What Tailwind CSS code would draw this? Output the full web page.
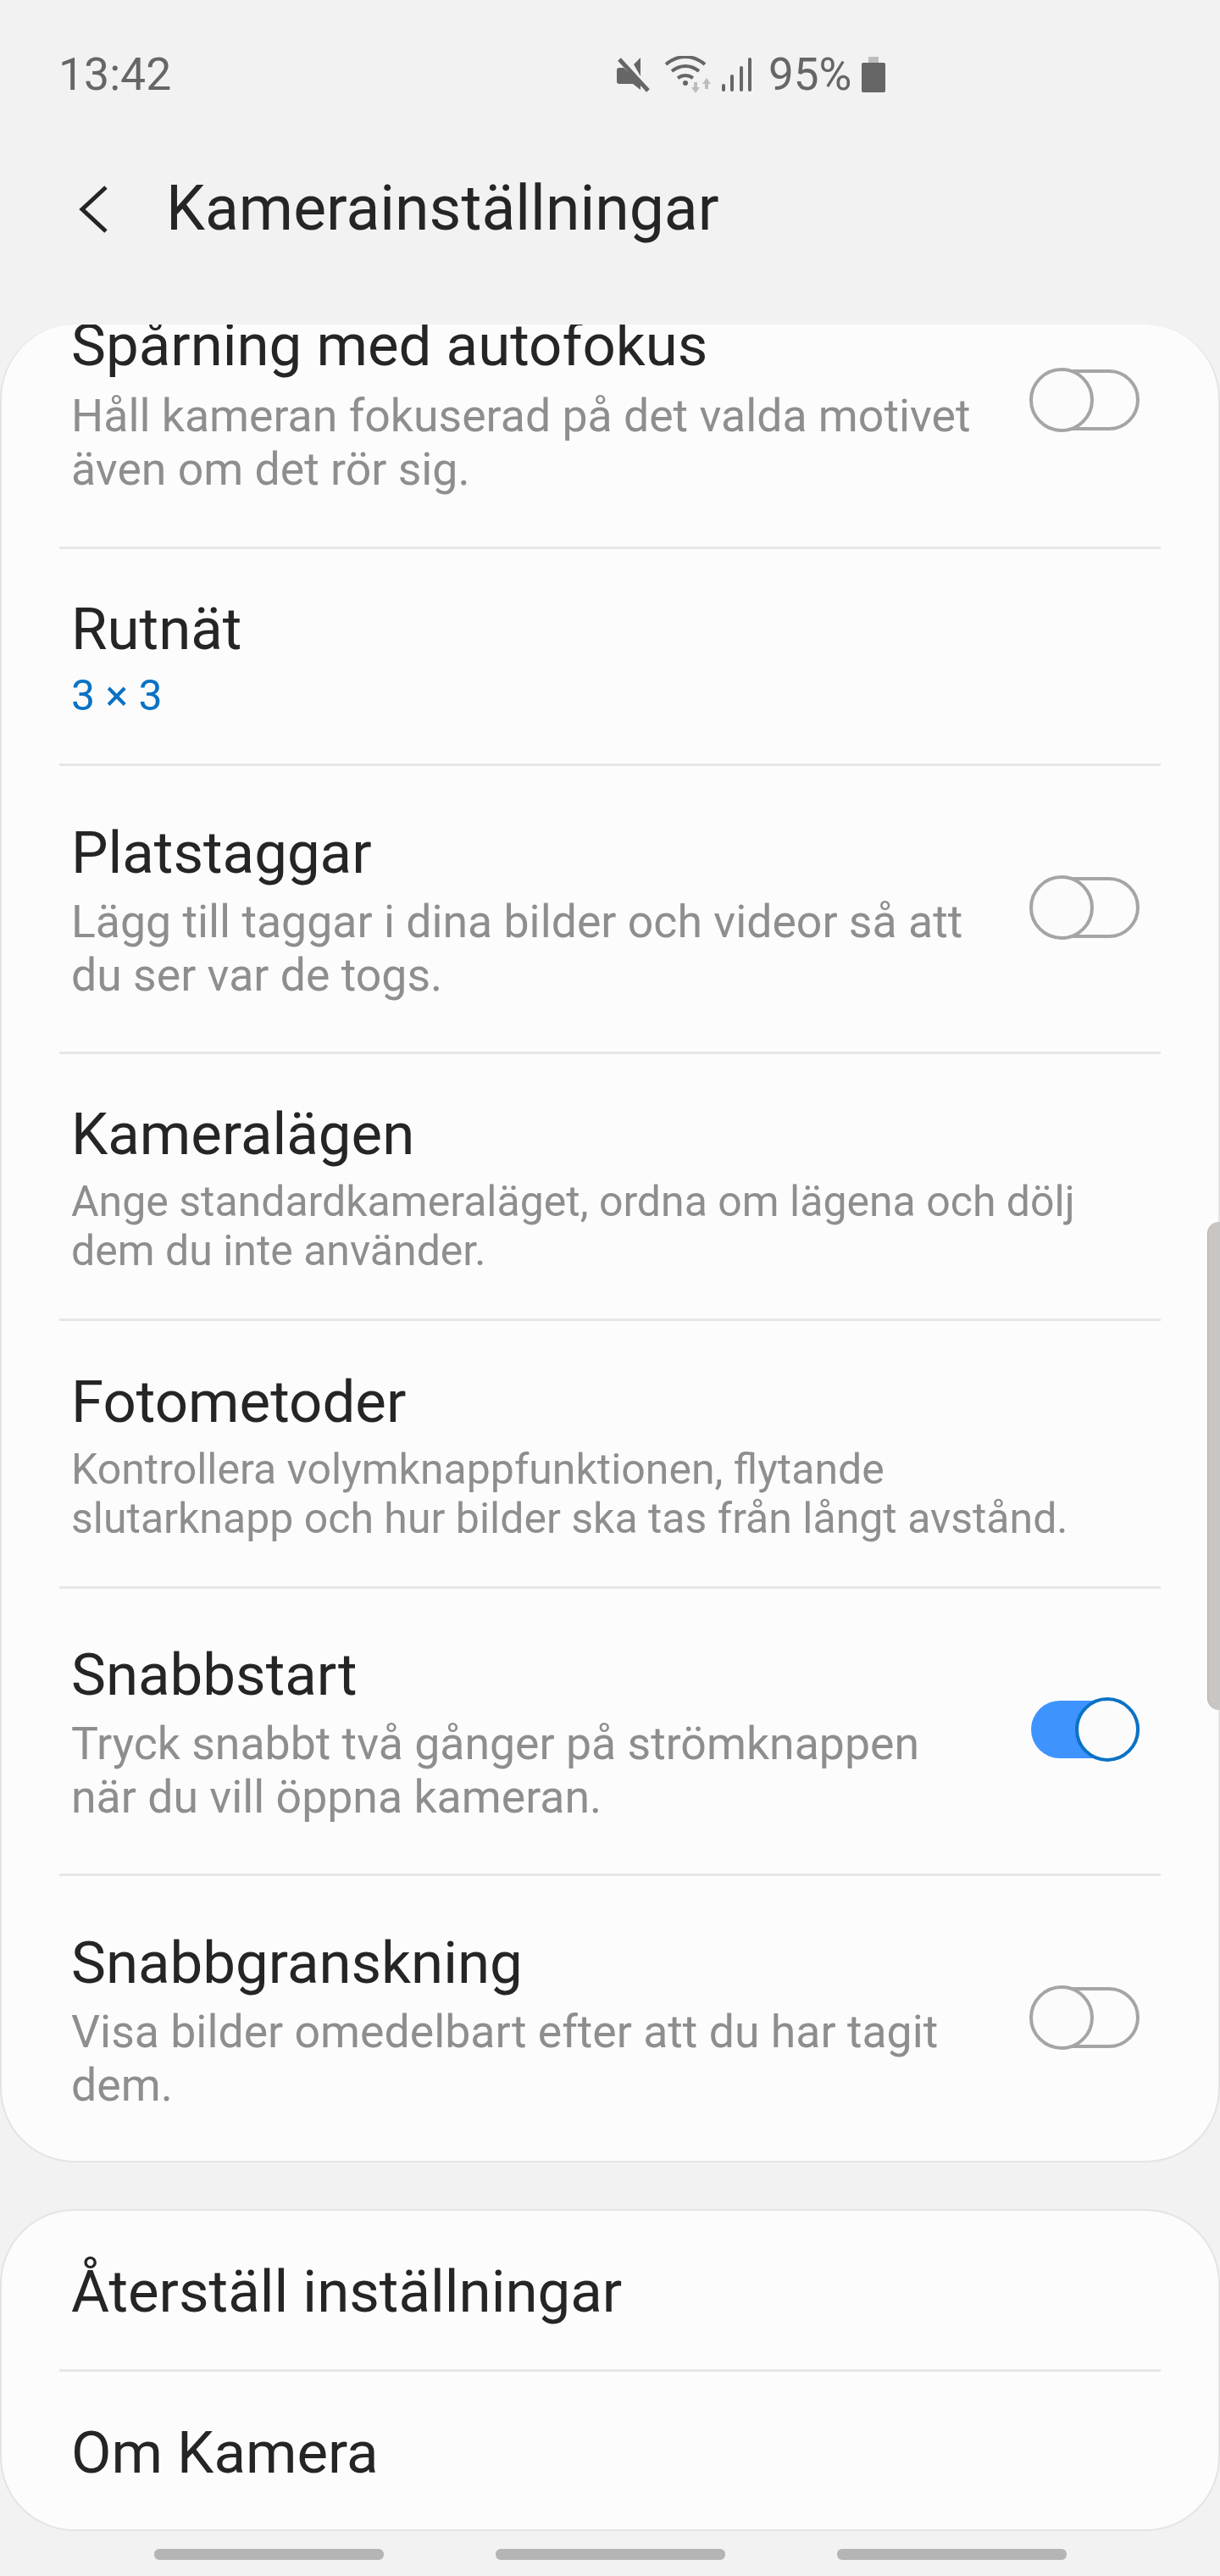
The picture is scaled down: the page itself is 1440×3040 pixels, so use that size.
<!DOCTYPE html>
<html lang="sv">
<head>
  <meta charset="UTF-8" />
  <title>Kamerainställningar</title>
  <script src="https://cdn.jsdelivr.net/npm/@tailwindcss/browser@4"></script>
</head>
<body class="bg-[#f2f2f2]">
<div class="relative w-[1440px] h-[3040px] overflow-hidden bg-[#f2f2f2] font-['Roboto',sans-serif] text-[#252525]">

  <!-- Status bar -->
  <div class="h-[176px] flex items-center pl-[69px] text-[#666666]">
    <div class="w-[659px] text-[53.5px] leading-none">13:42</div>
    <svg class="w-[39px] h-[41px] fill-[#666666]" viewBox="0 0 39 41">
      <path d="M0 15a3 3 0 0 1 3-3h5L28 30v8L19 31H3a3 3 0 0 1-3-3zM20 8l8-8v22z"/>
      <path d="M3 2l34 37" stroke="#666666" stroke-width="5" fill="none"/>
    </svg>
    <svg class="ml-[17px] w-[56px] h-[44px]" viewBox="0 0 56 44">
      <g fill="none" stroke="#666666" stroke-width="4">
        <path d="M2 10c14-12 32-12 46 0"/>
        <path d="M9 18c10-8 22-8 32 0"/>
        <path d="M16 26c6-4 12-4 18 0"/>
      </g>
      <circle cx="25" cy="32" r="3" fill="#666666"/>
      <path d="M37 44l-5-7h3v-6h4v6h3zM50 26l5 7h-3v6h-4v-6h-3z" fill="#bdbdbd"/>
    </svg>
    <svg class="ml-[12px] w-[36px] h-[40px] fill-[#666666]" viewBox="0 0 36 40">
      <rect x="0" y="31" width="4" height="9" rx="2"/>
      <rect x="10" y="20" width="4" height="20" rx="2"/>
      <rect x="21" y="10" width="4" height="30" rx="2"/>
      <rect x="31" y="0" width="4" height="40" rx="2"/>
    </svg>
    <div class="ml-[19px] text-[53px] leading-none">95%</div>
    <svg class="ml-[12px] w-[28px] h-[42px]" viewBox="0 0 28 42">
      <rect x="8" y="0" width="12" height="8" fill="#bdbdbd"/>
      <path d="M2 7h24a2 2 0 0 1 2 2v31a2 2 0 0 1-2 2H2a2 2 0 0 1-2-2V9a2 2 0 0 1 2-2z" fill="#666666"/>
    </svg>
  </div>

  <!-- Header -->
  <div class="h-[142px] flex items-center pl-[92px] mb-[65px]">
    <svg class="w-[36px] h-[58px]" viewBox="0 0 36 58" fill="none" stroke="#252525" stroke-width="5">
      <path d="M33 3L5 29l28 26"/>
    </svg>
    <div class="ml-[68px] text-[73.3px] leading-none">Kamerainställningar</div>
  </div>

  <!-- Main settings card -->
  <div class="h-[2169px] bg-[#fcfcfc] rounded-[88px] border-x-2 border-b-2 border-[#e4e4e4] overflow-hidden">

    <div class="-mt-[80px] h-[342px] flex items-center justify-between pl-[82px] pr-[93px]">
      <div>
        <div class="text-[69px] leading-[88px]">Spårning med autofokus</div>
        <div class="mt-[7px] text-[53.6px] leading-[63px] text-[#8e8e8e]">Håll kameran fokuserad på det valda motivet<br>även om det rör sig.</div>
      </div>
      <div class="relative w-[130px] h-[76px] mb-[4px]">
        <div class="absolute left-[2px] right-0 top-[2px] bottom-[2px] rounded-full border-4 border-[#a5a5a5]"></div>
        <div class="absolute left-0 top-0 w-[76px] h-[76px] rounded-full border-4 border-[#a5a5a5] bg-[#fbfbfb]"></div>
      </div>
    </div>
    <div class="mx-[68px] h-[3px] bg-[#e6e6e6]"></div>

    <div class="h-[253px] flex flex-col justify-center pl-[82px] pt-[2px]">
      <div class="text-[69px] leading-[88px]">Rutnät</div>
      <div class="mt-[3px] text-[50px] leading-[63px] text-[#0a72c4]">3 × 3</div>
    </div>
    <div class="mx-[68px] h-[3px] bg-[#e6e6e6]"></div>

    <div class="h-[337px] flex items-center justify-between pl-[82px] pr-[93px]">
      <div>
        <div class="text-[69px] leading-[88px]">Platstaggar</div>
        <div class="mt-[5px] text-[53.6px] leading-[63px] text-[#8e8e8e]">Lägg till taggar i dina bilder och videor så att<br>du ser var de togs.</div>
      </div>
      <div class="relative w-[130px] h-[76px] mb-[4px]">
        <div class="absolute left-[2px] right-0 top-[2px] bottom-[2px] rounded-full border-4 border-[#a5a5a5]"></div>
        <div class="absolute left-0 top-0 w-[76px] h-[76px] rounded-full border-4 border-[#a5a5a5] bg-[#fbfbfb]"></div>
      </div>
    </div>
    <div class="mx-[68px] h-[3px] bg-[#e6e6e6]"></div>

    <div class="h-[312px] flex flex-col justify-center pl-[82px]">
      <div class="text-[69px] leading-[88px]">Kameralägen</div>
      <div class="mt-[6px] text-[50px] leading-[58px] text-[#8e8e8e]">Ange standardkameraläget, ordna om lägena och dölj<br>dem du inte använder.</div>
    </div>
    <div class="mx-[68px] h-[3px] bg-[#e6e6e6]"></div>

    <div class="h-[313px] flex flex-col justify-center pl-[82px]">
      <div class="text-[69px] leading-[88px]">Fotometoder</div>
      <div class="mt-[6px] text-[50px] leading-[58px] text-[#8e8e8e]">Kontrollera volymknappfunktionen, flytande<br>slutarknapp och hur bilder ska tas från långt avstånd.</div>
    </div>
    <div class="mx-[68px] h-[3px] bg-[#e6e6e6]"></div>

    <div class="h-[336px] flex items-center justify-between pl-[82px] pr-[93px]">
      <div class="mb-[2px]">
        <div class="text-[69px] leading-[88px]">Snabbstart</div>
        <div class="mt-[5px] text-[53.6px] leading-[63px] text-[#8e8e8e]">Tryck snabbt två gånger på strömknappen<br>när du vill öppna kameran.</div>
      </div>
      <div class="relative w-[130px] h-[76px] mb-[5px]">
        <div class="absolute left-[2px] right-0 top-[4px] bottom-[4px] rounded-full bg-[#3e93ff]"></div>
        <div class="absolute right-0 top-0 w-[76px] h-[76px] rounded-full border-4 border-[#0b72c5] bg-[#fbfbfb]"></div>
      </div>
    </div>
    <div class="mx-[68px] h-[3px] bg-[#e6e6e6]"></div>

    <div class="h-[339px] flex items-center justify-between pl-[82px] pr-[93px]">
      <div class="mb-[2px]">
        <div class="text-[69px] leading-[88px]">Snabbgranskning</div>
        <div class="mt-[5px] text-[53.6px] leading-[63px] text-[#8e8e8e]">Visa bilder omedelbart efter att du har tagit<br>dem.</div>
      </div>
      <div class="relative w-[130px] h-[76px] mb-[5px]">
        <div class="absolute left-[2px] right-0 top-[2px] bottom-[2px] rounded-full border-4 border-[#a5a5a5]"></div>
        <div class="absolute left-0 top-0 w-[76px] h-[76px] rounded-full border-4 border-[#a5a5a5] bg-[#fbfbfb]"></div>
      </div>
    </div>
  </div>

  <!-- Second card -->
  <div class="mt-[55px] h-[380px] bg-[#fcfcfc] rounded-[88px] border-2 border-[#e4e4e4] flex flex-col">
    <div class="flex-1 flex items-center pl-[82px] pt-[6px] text-[69px] leading-[88px]">Återställ inställningar</div>
    <div class="mx-[68px] h-[3px] bg-[#e6e6e6]"></div>
    <div class="flex-1 flex items-center pl-[82px] pt-[6px] text-[69px] leading-[88px]">Om Kamera</div>
  </div>

  <!-- Nav bar pills -->
  <div class="mt-[21px] flex justify-center gap-[132px]">
    <div class="w-[271px] h-[13px] rounded-[6px] bg-[#b5b5b5]"></div>
    <div class="w-[271px] h-[13px] rounded-[6px] bg-[#b5b5b5]"></div>
    <div class="w-[271px] h-[13px] rounded-[6px] bg-[#b5b5b5]"></div>
  </div>

  <!-- Scrollbar overlay -->
  <div class="absolute right-0 top-[1442px] w-[15px] h-[576px] rounded-l-[14px] bg-[#c9c5c3] border-l border-[#b0b0b0]"></div>
</div>
</body>
</html>
